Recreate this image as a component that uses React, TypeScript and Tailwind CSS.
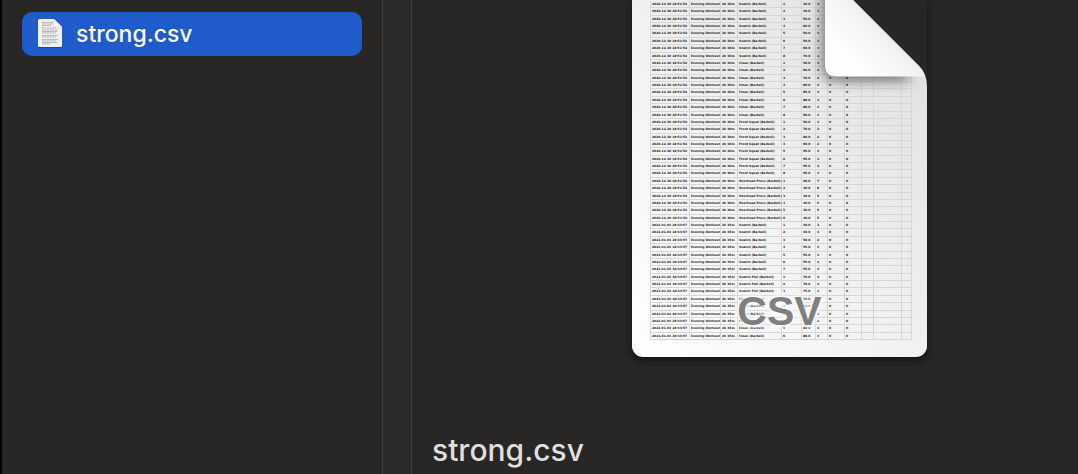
import React from "react";

type SetRow = [weight: string, reps: number];

interface Exercise {
  date: string;
  duration: string;
  name: string;
  sets: SetRow[];
}

const FIRST = "2020-12-30 18:51:52";
const SECOND = "2021-01-04 18:33:57";

const exercises: Exercise[] = [
  { date: FIRST, duration: "2h 30m", name: "Snatch (Barbell)", sets: [["40.0", 3], ["40.0", 3], ["50.0", 2], ["60.0", 4], ["50.0", 4], ["50.0", 4], ["60.0", 4], ["70.0", 1]] },
  { date: FIRST, duration: "2h 30m", name: "Clean (Barbell)", sets: [["50.0", 4], ["60.0", 2], ["70.0", 2], ["80.0", 2], ["85.0", 4], ["88.0", 4], ["88.0", 4], ["90.0", 4]] },
  { date: FIRST, duration: "2h 30m", name: "Front Squat (Barbell)", sets: [["50.0", 4], ["70.0", 2], ["80.0", 2], ["90.0", 2], ["95.0", 4], ["95.0", 4], ["95.0", 3], ["95.0", 4]] },
  { date: FIRST, duration: "2h 30m", name: "Overhead Press (Barbell)", sets: [["20.0", 7], ["40.0", 6], ["40.0", 5], ["40.0", 5], ["40.0", 5], ["40.0", 5]] },
  { date: SECOND, duration: "2h 35m", name: "Snatch (Barbell)", sets: [["40.0", 3], ["40.0", 3], ["50.0", 2], ["55.0", 4], ["55.0", 4], ["55.0", 4], ["55.0", 4]] },
  { date: SECOND, duration: "2h 35m", name: "Snatch Pull (Barbell)", sets: [["70.0", 3], ["70.0", 3], ["75.0", 4]] },
  { date: SECOND, duration: "2h 35m", name: "Clean (Barbell)", sets: [["50.0", 4], ["60.0", 2], ["70.0", 2], ["80.0", 2], ["80.0", 4], ["88.0", 4]] },
];

const rows: string[][] = exercises.flatMap((e) =>
  e.sets.map(([weight, reps], i) => [
    e.date, "Evening Workout", e.duration, e.name, String(i + 1), weight, String(reps), "0", "0", "", "", "",
  ]),
);

function FileIcon() {
  return (
    <svg className="h-8 w-7 shrink-0" viewBox="0 0 28 32" aria-hidden="true">
      <path d="M3.500 3H18l8 8v17.500a1.500 1.500 0 0 1-1.500 1.500h-21A1.500 1.500 0 0 1 2 28.500v-24A1.500 1.500 0 0 1 3.500 3z" fill="#0b2f7a" opacity=".45" />
      <path d="M3.500 1H18l8 8v18.500a1.500 1.500 0 0 1-1.500 1.500h-21A1.500 1.500 0 0 1 2 27.500v-25A1.500 1.500 0 0 1 3.500 1z" fill="#f1f1f1" />
      <g stroke="#8d8d8d" strokeWidth="1.100" strokeDasharray="2.500 .3 1.500 .3 3 .3" opacity=".6">
        <path d="M6 4.500h11M6 6h11M6 7.500h9M6 10h14M6 12h16M6 13.500h15M6 15h14M6 17.500h16M6 19h14M6 21.500h16M6 23h14M6 24.500h15M6 26h8" />
      </g>
      <path d="M18 1l8 8h-7a1 1 0 0 1-1-1z" fill="#fff" stroke="#b9b9b9" strokeWidth=".5" />
    </svg>
  );
}

function PageFold() {
  return (
    <svg className="pointer-events-none absolute top-0 right-0 h-32 w-32" viewBox="0 0 128 128" aria-hidden="true">
      <defs>
        <linearGradient id="flap" x1="26" y1="76" x2="84" y2="18" gradientUnits="userSpaceOnUse">
          <stop offset="0" stopColor="#fff" />
          <stop offset=".4" stopColor="#fdfdfd" />
          <stop offset=".8" stopColor="#f3f3f3" />
          <stop offset="1" stopColor="#e8e8e8" />
        </linearGradient>
        <filter id="flapShadow" x="-40%" y="-40%" width="180%" height="180%">
          <feGaussianBlur stdDeviation="7" />
        </filter>
        <clipPath id="sheet">
          <path d="M0 0H54L119 66Q128 75 128 86V128H0z" />
        </clipPath>
      </defs>
      <g clipPath="url(#sheet)">
        <path d="M24-20V68q0 12 12 12h76L54-20z" fill="#000" opacity=".55" filter="url(#flapShadow)" />
      </g>
      <path d="M54 0L120 66Q128 74 128 86H136V-6H54z" fill="#282725" />
      <path d="M26 0V65q0 11.500 12 11.500H126Q124.500 70.500 120 66L54 0z" fill="url(#flap)" />
    </svg>
  );
}

function DocumentPreview() {
  return (
    <figure className="relative ml-[200px] w-[295px] rounded-b-[11px] bg-linear-to-bl from-[#dedede] via-[#f0f0f0] to-white px-[18px] pt-px pb-[17px] shadow-[0_3px_8px_rgba(0,0,0,0.6)]">
      <table className="block w-[262px] border-l border-[#d6d6d6] font-['DejaVu_Sans',sans-serif] text-[3px] leading-[5px] font-bold text-[#222] [text-rendering:geometricPrecision]">
        <caption className="sr-only">strong.csv</caption>
        <tbody className="grid h-[339px] grid-rows-[repeat(46,minmax(0,1fr))]">
          {rows.map((row, r) => (
            <tr key={r} className="grid min-h-0 grid-cols-[39px_31px_17px_44px_20px_14px_12px_17px_17px_12px_28px_10px] border-b border-[#d6d6d6]">
              {row.map((cell, c) => (
                <td key={c} className="min-w-0 overflow-visible border-r border-[#d6d6d6] pt-px pl-px whitespace-nowrap">
                  {cell}
                </td>
              ))}
            </tr>
          ))}
        </tbody>
      </table>
      <PageFold />
      <figcaption className="absolute inset-x-0 bottom-[22px] text-center font-['Liberation_Sans',sans-serif] text-[41px] leading-[48px] font-bold text-[#7f7f7f] [text-shadow:0_0_3px_#fff,0_0_5px_#fff,0_0_8px_#fff]">
        CSV
      </figcaption>
    </figure>
  );
}

export default function App() {
  return (
    <div className="flex min-h-screen overflow-hidden border-l-2 border-black bg-[#282725] font-['Inter',sans-serif] font-medium">
      <nav className="w-[380px] shrink-0 px-5 pt-3" aria-label="Files">
        <a href="#strong" aria-current="true" className="flex h-11 items-center gap-3 rounded-[10px] bg-[#1f5bca] pl-[14px] text-[23px] text-white">
          <FileIcon />
          strong.csv
        </a>
      </nav>
      <div className="w-[30px] shrink-0 border-x border-[#3c3c3c] bg-[#2b2b2b]" />
      <main id="strong" className="flex min-w-0 flex-1 flex-col pl-5">
        <DocumentPreview />
        <h1 className="mt-auto pt-12 pb-1 text-[30px] leading-10 text-[#dfdfde]">strong.csv</h1>
      </main>
    </div>
  );
}
